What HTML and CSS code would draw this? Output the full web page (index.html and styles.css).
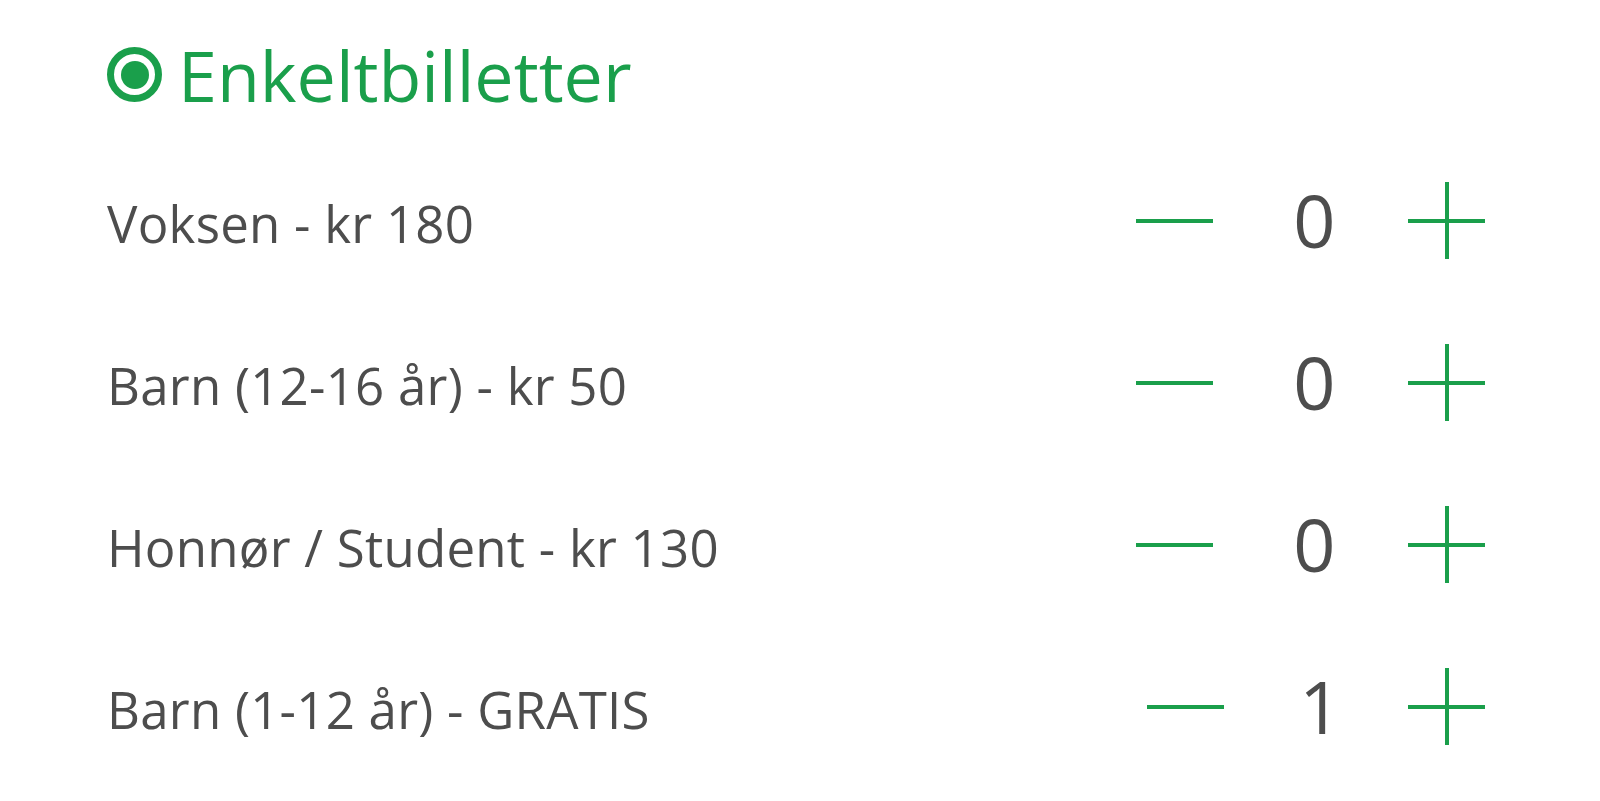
FILE: index.html
```html
<!DOCTYPE html>
<html lang="no">
<head>
<meta charset="utf-8">
<title>Enkeltbilletter</title>
<link rel="stylesheet" href="styles.css">
</head>
<body>
<main class="tickets">
  <div class="title">
    <span class="radio"><span class="radio-dot"></span></span>
    <h1 class="title-text">Enkeltbilletter</h1>
  </div>
  <ul class="rows">
    <li class="row">
      <span class="label">Voksen - kr 180</span>
      <div class="stepper">
        <button class="btn minus" aria-label="minus"></button>
        <span class="count">0</span>
        <button class="btn plus" aria-label="plus"></button>
      </div>
    </li>
    <li class="row">
      <span class="label">Barn (12-16 år) - kr 50</span>
      <div class="stepper">
        <button class="btn minus" aria-label="minus"></button>
        <span class="count">0</span>
        <button class="btn plus" aria-label="plus"></button>
      </div>
    </li>
    <li class="row">
      <span class="label">Honnør / Student - kr 130</span>
      <div class="stepper">
        <button class="btn minus" aria-label="minus"></button>
        <span class="count">0</span>
        <button class="btn plus" aria-label="plus"></button>
      </div>
    </li>
    <li class="row">
      <span class="label">Barn (1-12 år) - GRATIS</span>
      <div class="stepper">
        <button class="btn minus" aria-label="minus"></button>
        <span class="count">1</span>
        <button class="btn plus" aria-label="plus"></button>
      </div>
    </li>
  </ul>
</main>
</body>
</html>
```

FILE: styles.css
```css
html, body {
  margin: 0;
  padding: 0;
  background: #ffffff;
}
body {
  font-family: "Open Sans", "Noto Sans", sans-serif;
  color: #4d4d4d;
}
.tickets {
  padding: 0 115px 0 107px;
}
.title {
  display: flex;
  align-items: center;
  gap: 16px;
  height: 139px;
  padding-top: 10px;
  box-sizing: border-box;
}
.radio {
  width: 55px;
  height: 55px;
  box-sizing: border-box;
  border: 7px solid #1a9f4b;
  border-radius: 50%;
  display: flex;
  align-items: center;
  justify-content: center;
}
.radio-dot {
  width: 28px;
  height: 28px;
  border-radius: 50%;
  background: #1a9f4b;
}
.title-text {
  margin: 0;
  font-size: 70px;
  font-weight: 400;
  color: #1a9f4b;
  line-height: 1;
}
.rows {
  list-style: none;
  margin: 0;
  padding: 0;
}
.row {
  display: flex;
  align-items: center;
  justify-content: space-between;
  height: 162px;
}
.label {
  font-size: 51px;
  letter-spacing: 0.25px;
  line-height: 1;
  padding-top: 6px;
}
.stepper {
  display: flex;
  align-items: center;
}
.btn {
  position: relative;
  width: 77px;
  height: 77px;
  padding: 0;
  border: 0;
  background: none;
}
.btn::before,
.btn::after {
  content: "";
  position: absolute;
  background: #1a9f4b;
}
.btn::before {
  left: 0;
  right: 0;
  top: 37px;
  height: 4px;
}
.plus::after {
  top: 0;
  bottom: 0;
  left: 37px;
  width: 4px;
}
.minus::after {
  display: none;
}
.count {
  font-size: 74px;
  line-height: 1;
  font-variant-numeric: proportional-nums;
  margin: 0 72px 0 80px;
}
```
